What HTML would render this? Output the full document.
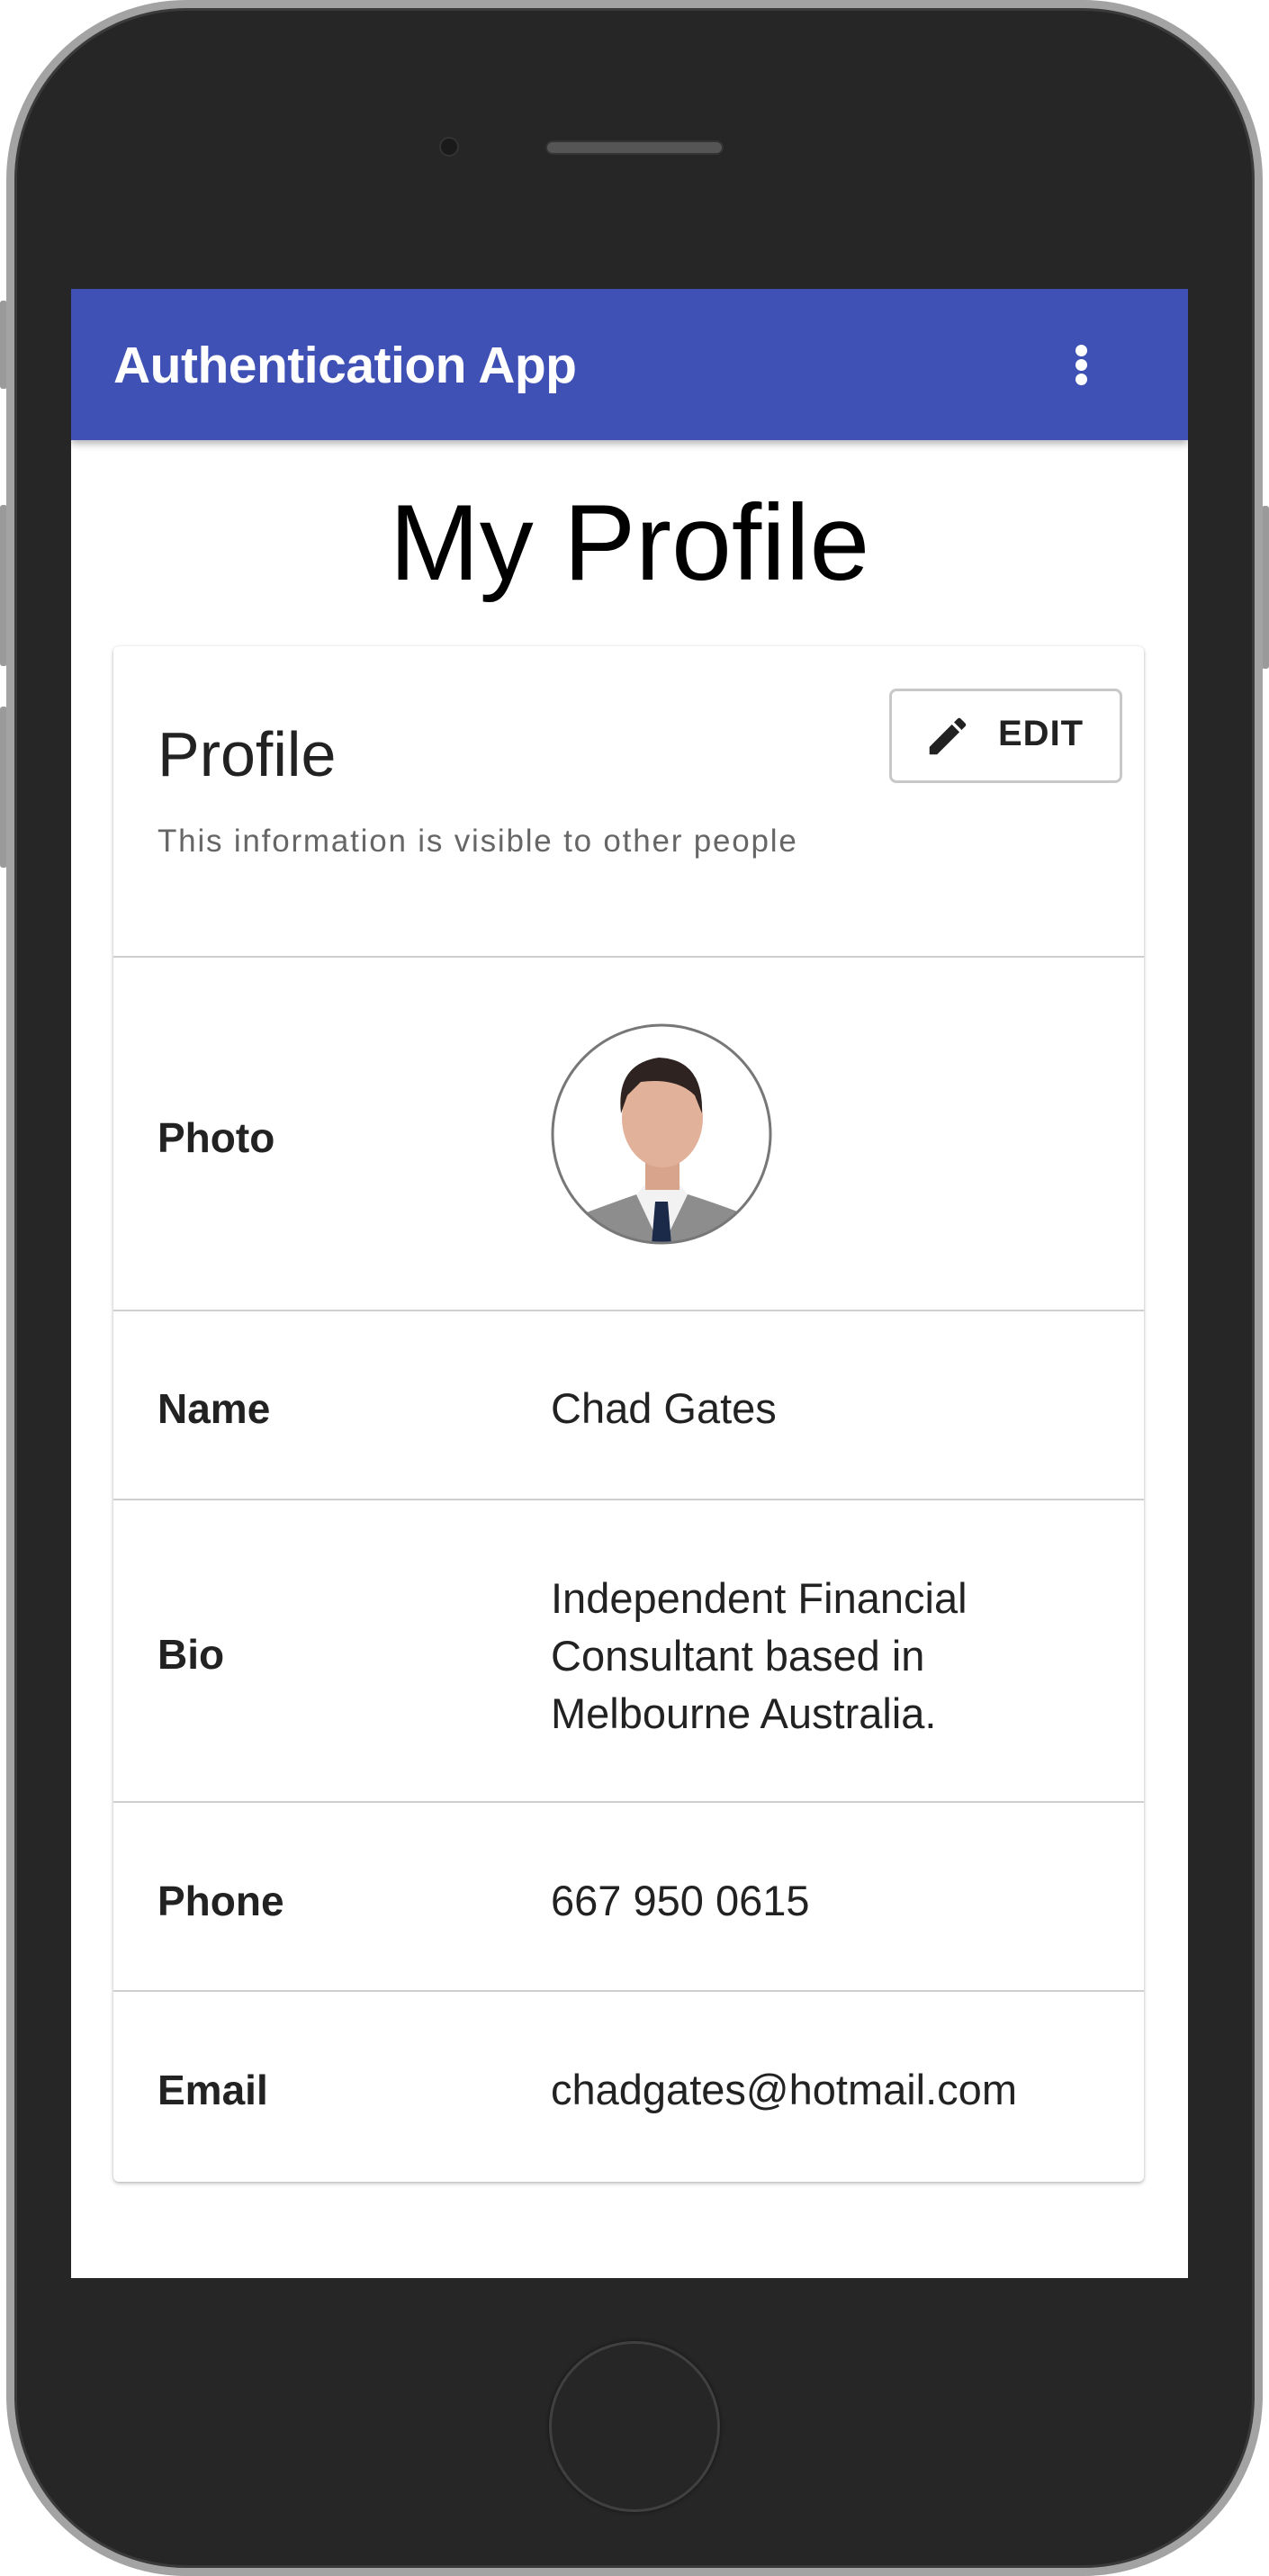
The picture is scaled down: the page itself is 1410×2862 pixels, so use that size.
<!DOCTYPE html>
<html><head><meta charset="utf-8">
<style>
*{margin:0;padding:0;box-sizing:border-box}
html,body{width:1410px;height:2862px;background:#fff;overflow:hidden;font-family:"Liberation Sans",sans-serif}
.phone{position:absolute;left:7px;top:0;width:1396px;height:2862px;border-radius:200px;background:#262626;border:9px solid #a3a3a3;box-shadow:inset 0 0 0 3px #3a3a3a}
.btn{position:absolute;background:#9a9a9a;border-radius:3px;width:8px}
.screen{position:absolute;left:79px;top:321px;width:1241px;height:2210px;background:#fff;overflow:hidden}
.bar{position:absolute;left:0;top:0;width:100%;height:168px;background:#3f51b5;box-shadow:0 4px 8px rgba(0,0,0,.3);z-index:2}
.bar .t{position:absolute;left:47px;top:52px;color:#fff;font-size:57px;font-weight:bold;letter-spacing:-0.5px}
.dot{position:absolute;left:1116px;width:13px;height:13px;border-radius:50%;background:#fff}
h1{position:absolute;left:0;width:100%;text-align:center;font-weight:normal;font-size:120px;color:#000;line-height:140px}
.card{position:absolute;left:47px;top:397px;width:1145px;height:1706px;border-radius:6px;box-shadow:0 2px 4px rgba(0,0,0,.25),0 0 2px rgba(0,0,0,.1);background:#fff}
.abs{position:absolute}
.hr{position:absolute;left:0;width:100%;height:2px;background:#cfcfcf}
.lab{position:absolute;left:49px;font-size:46px;font-weight:bold;color:#222;line-height:64px}
.val{position:absolute;left:486px;font-size:47px;color:#222;line-height:64px}
</style></head><body>
<div class="btn" style="left:0;top:334px;height:98px"></div>
<div class="btn" style="left:0;top:561px;height:179px"></div>
<div class="btn" style="left:0;top:785px;height:179px"></div>
<div class="btn" style="left:1402px;top:562px;height:181px"></div>
<div class="phone"></div>
<div class="abs" style="left:488px;top:152px;width:22px;height:22px;border-radius:50%;background:#1a1a1a;border:2px solid #333"></div>
<div class="abs" style="left:606px;top:156px;width:198px;height:16px;border-radius:8px;background:#555;border:2px solid #333"></div>
<div class="abs" style="left:610px;top:2601px;width:190px;height:190px;border-radius:50%;border:3px solid #404040;box-shadow:0 0 4px #111"></div>
<div class="screen">
 <div class="bar"><div class="t">Authentication App</div>
  <div class="dot" style="top:62px"></div><div class="dot" style="top:78px"></div><div class="dot" style="top:94px"></div>
 </div>
 <h1 style="top:212px">My Profile</h1>
 <div class="card">
  <div class="abs" style="left:49px;top:80px;font-size:70px;color:#222">Profile</div>
  <div class="abs" style="left:49px;top:197px;font-size:35px;color:#666;letter-spacing:1.8px">This information is visible to other people</div>
  <div class="abs" style="left:862px;top:47px;width:259px;height:105px;border:3px solid #c8c8c8;border-radius:8px"></div>
  <svg class="abs" style="left:900px;top:73px" width="54" height="54" viewBox="0 0 24 24"><path fill="#222" d="M3 17.25V21h3.75L17.810 9.94l-3.75-3.75L3 17.25zM20.71 7.04a1 1 0 0 0 0-1.41l-2.34-2.34a1 1 0 0 0-1.41 0l-1.83 1.83 3.75 3.75 1.830-1.83z"/></svg>
  <div class="abs" style="left:983px;top:75px;font-size:40px;font-weight:bold;color:#222;letter-spacing:1px">EDIT</div>
  <div class="hr" style="top:344px"></div>
  <div class="lab" style="top:514px">Photo</div>
  <svg class="abs" style="left:486px;top:419px" width="246" height="246" viewBox="0 0 246 246">
   <defs><clipPath id="c"><circle cx="123" cy="123" r="121"/></clipPath></defs>
   <g clip-path="url(#c)">
    <rect width="246" height="246" fill="#fff"/>
    <path d="M20 246 L40 210 Q80 195 110 185 L136 185 Q170 195 210 210 L230 246Z" fill="#8d8d8d"/>
    <path d="M95 190 L123 250 L152 190 L140 175 L108 175Z" fill="#f2f2f2"/>
    <path d="M116 198 L130 198 L134 246 L112 246Z" fill="#1c2a4a"/>
    <rect x="105" y="140" width="38" height="45" fill="#d9a48c"/>
    <ellipse cx="124" cy="105" rx="45" ry="55" fill="#e2b19a"/>
    <path d="M78 100 Q72 45 120 38 Q170 40 168 100 L160 80 Q140 60 100 65 L85 80Z" fill="#2e2320"/>
   </g>
   <circle cx="123" cy="123" r="121" fill="none" stroke="#777" stroke-width="3"/>
  </svg>
  <div class="hr" style="top:737px"></div>
  <div class="lab" style="top:815px">Name</div>
  <div class="val" style="top:815px">Chad Gates</div>
  <div class="hr" style="top:947px"></div>
  <div class="lab" style="top:1088px">Bio</div>
  <div class="val" style="top:1026px">Independent Financial<br>Consultant based in<br>Melbourne Australia.</div>
  <div class="hr" style="top:1283px"></div>
  <div class="lab" style="top:1362px">Phone</div>
  <div class="val" style="top:1362px">667 950 0615</div>
  <div class="hr" style="top:1493px"></div>
  <div class="lab" style="top:1572px">Email</div>
  <div class="val" style="top:1572px">chadgates@hotmail.com</div>
 </div>
</div>
</body></html>
